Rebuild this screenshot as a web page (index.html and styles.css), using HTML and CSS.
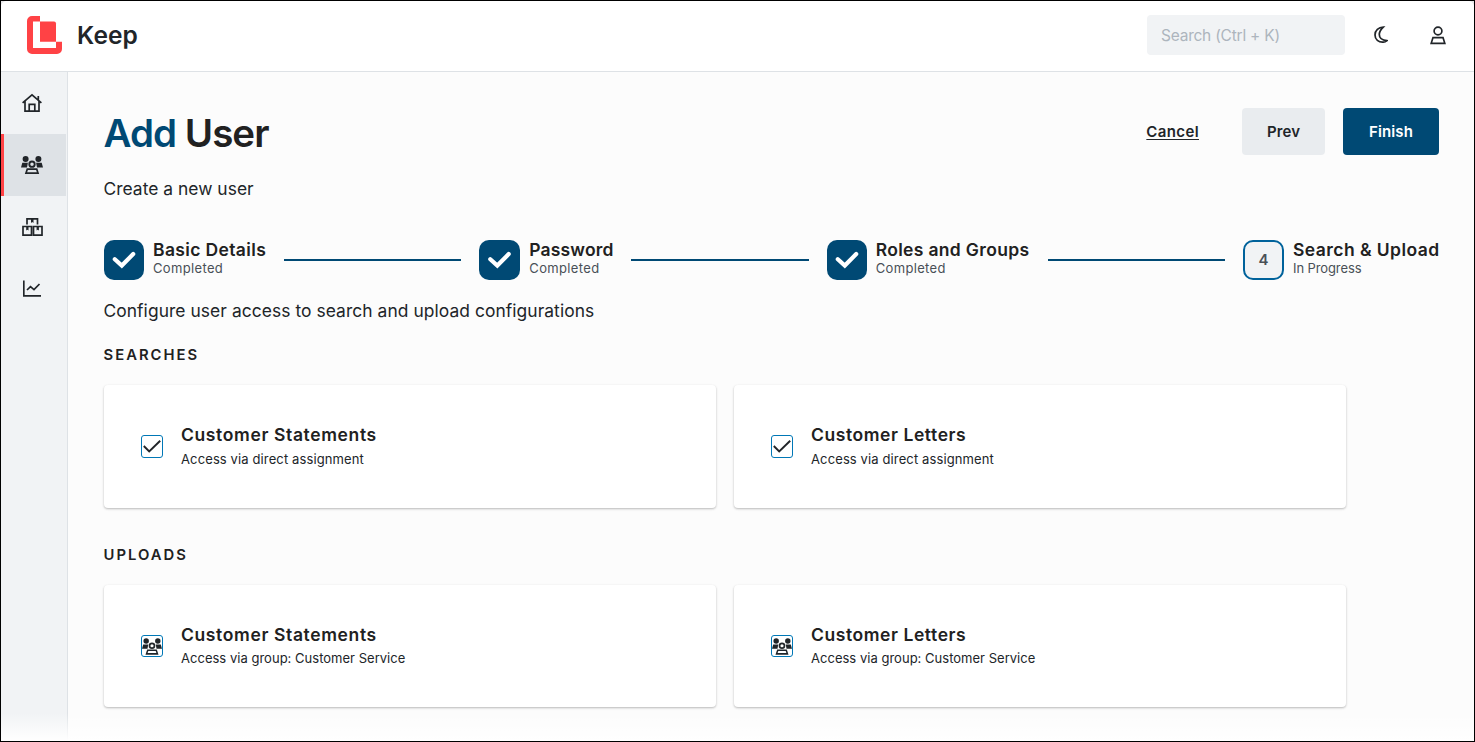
FILE: index.html
```html
<!DOCTYPE html>
<html lang="en">
<head>
<meta charset="utf-8">
<title>Keep - Add User</title>
<link rel="stylesheet" href="styles.css">
</head>
<body>
<svg class="defs" aria-hidden="true">
  <symbol id="people" viewBox="0 0 22 18">
    <circle cx="4.600" cy="3" r="3"/><circle cx="17.400" cy="3" r="3"/>
    <path d="M0 11.400 1.300 6.800H6.900L6 11.400zM22 11.400 20.700 6.800H15.100L16 11.400z"/>
    <circle cx="11" cy="8.200" r="2.700" fill="none" stroke="currentColor" stroke-width="1.900"/>
    <path d="M6.300 13.200H15.700L17 17.100H5z" fill="none" stroke="currentColor" stroke-width="1.700"/>
  </symbol>
  <symbol id="step-check" viewBox="0 0 40 40">
    <path d="M10.800 19.200 17.800 25.500 29.200 14.100" fill="none" stroke="currentColor" stroke-width="4.200" stroke-linecap="round" stroke-linejoin="miter"/>
  </symbol>
  <symbol id="tick" viewBox="0 0 20 20">
    <path d="M1.800 9 7.200 14.500 18.200 3.700" fill="none" stroke="currentColor" stroke-width="1.900"/>
  </symbol>
</svg>
<div class="frame">
<div class="app">
  <header class="topbar">
    <svg class="logo" viewBox="0 0 35 38"><path d="M5 0H13V5.500H6V32H29V25.700H35V33A5 5 0 0 1 30 38H5A5 5 0 0 1 0 33V5A5 5 0 0 1 5 0Z" fill="#ff4245"/><path d="M13 5.500H27A2 2 0 0 1 29 7.500V25.700H13Z" fill="#ff4245"/></svg>
    <span class="brand">Keep</span>
    <div class="search">Search (Ctrl + K)</div>
    <svg class="moon" viewBox="0 0 14 18"><path d="M9.300 1.200C4.500 1.300 1 4.500 1 9S4.500 16.500 9.300 16.200C10.800 16.100 12 15.500 13 14.700 8.500 14.300 5.300 12 5.300 8.600 5.300 5.500 7.400 3 9.300 1.200Z"/></svg>
    <svg class="person" viewBox="0 0 16 19"><circle cx="8" cy="5" r="3.900"/><path d="M3 11.600H13L14.800 17.300H1.200Z"/></svg>
  </header>
  <div class="body">
    <nav class="sidebar">
      <a class="nav-item"><svg width="20" height="20" viewBox="0 0 20 20"><path d="M.6 9.800 10 1.800 19.400 9.800M3 8.300V18.200H17V8.300M16.300 6.800V3M7.200 18V11.300H12.800V18" fill="none" stroke="currentColor" stroke-width="1.700"/></svg></a>
      <a class="nav-item active"><svg width="22" height="18"><use href="#people"/></svg></a>
      <a class="nav-item"><svg width="21" height="18" viewBox="0 0 21 18"><path d="M5 6.500V.8H15.500V6.500M1 8.500H9.500V17.200H1ZM11.500 8.500H20V17.200H11.500Z" fill="none" stroke="currentColor" stroke-width="1.700"/><path d="M9 1H11.500V5L10.200 4 9 5ZM4.200 9H6.500V12.600L5.300 11.700 4.200 12.600ZM14.600 9H16.900V12.600L15.700 11.700 14.600 12.600Z"/></svg></a>
      <a class="nav-item chart"><svg width="18" height="17" viewBox="0 0 18 17"><path d="M.8.500V15.800H18M4 10 7.500 6.600 11 9.600 16.500 4" fill="none" stroke="currentColor" stroke-width="1.700"/></svg></a>
    </nav>
    <main class="main">
      <div class="title-row">
        <h1 class="title"><span class="accent">Add</span> User</h1>
        <div class="actions"><a class="cancel">Cancel</a><button class="btn prev">Prev</button><button class="btn finish">Finish</button></div>
      </div>
      <p class="lead">Create a new user</p>
      <div class="stepper">
        <div class="step basic"><svg class="step-icon done"><use href="#step-check"/></svg><div><div class="step-name">Basic Details</div><div class="step-state">Completed</div></div></div>
        <div class="line"></div>
        <div class="step password"><svg class="step-icon done"><use href="#step-check"/></svg><div><div class="step-name">Password</div><div class="step-state">Completed</div></div></div>
        <div class="line"></div>
        <div class="step roles"><svg class="step-icon done"><use href="#step-check"/></svg><div><div class="step-name">Roles and Groups</div><div class="step-state">Completed</div></div></div>
        <div class="line"></div>
        <div class="step upload"><div class="step-icon current">4</div><div><div class="step-name">Search &amp; Upload</div><div class="step-state">In Progress</div></div></div>
      </div>
      <p class="lead config">Configure user access to search and upload configurations</p>
      <h2 class="section">SEARCHES</h2>
      <div class="cards searches">
        <div class="card"><div class="check"><svg width="20" height="20"><use href="#tick"/></svg></div><div><div class="card-name">Customer Statements</div><div class="card-note">Access via direct assignment</div></div></div>
        <div class="card"><div class="check"><svg width="20" height="20"><use href="#tick"/></svg></div><div><div class="card-name letters">Customer Letters</div><div class="card-note">Access via direct assignment</div></div></div>
      </div>
      <h2 class="section">UPLOADS</h2>
      <div class="cards uploads">
        <div class="card"><div class="check"><svg width="20" height="17"><use href="#people"/></svg></div><div><div class="card-name">Customer Statements</div><div class="card-note">Access via group: Customer Service</div></div></div>
        <div class="card"><div class="check"><svg width="20" height="17"><use href="#people"/></svg></div><div><div class="card-name letters">Customer Letters</div><div class="card-note">Access via group: Customer Service</div></div></div>
      </div>
    </main>
  </div>
  <div class="fade"></div>
</div>
</div>
</body>
</html>
```
FILE: styles.css
```css
* { box-sizing: border-box; }
body { margin: 0; font-family: Inter, "Open Sans", sans-serif; color: #212529; }
h1, h2, p { margin: 0; }
svg { display: block; fill: currentColor; flex: none; }
.defs { position: absolute; width: 0; height: 0; }
.frame { width: 1475px; height: 742px; border: 1px solid #000; background: #e6e6e8; overflow: hidden; }
.app { position: relative; height: 740px; display: flex; flex-direction: column; border-radius: 6px 6px 0 0; overflow: hidden; background: #fcfcfc; }

.topbar { height: 71px; flex: none; display: flex; align-items: center; background: #fff; border-bottom: 1px solid #dee2e6; padding: 0 28px 2px 26px; }
.logo { width: 35px; height: 38px; }
.brand { margin-left: 15px; font-size: 24.5px; font-weight: 600; letter-spacing: .13px; line-height: 30px; }
.search { margin-left: auto; width: 198px; height: 40px; border-radius: 4px; background: #f1f3f5; color: #adb5bd; font-size: 15.5px; line-height: 41px; letter-spacing: -.23px; padding-left: 14px; white-space: nowrap; }
.moon { width: 14px; height: 18px; margin-left: 29px; fill: none; stroke: #212529; stroke-width: 1.7; }
.person { width: 16px; height: 19px; margin-left: 42px; fill: none; stroke: #212529; stroke-width: 1.7; }

.body { flex: 1; display: flex; min-height: 0; }
.sidebar { width: 67px; flex: none; background: #f1f3f5; border-right: 1px solid #dee2e6; padding-right: 1px; }
.nav-item { height: 62px; display: flex; align-items: center; justify-content: center; padding-right: 3px; }
.nav-item.active { background: #dee2e6; border-left: 3px solid #ff4245; padding-right: 6px; }
.nav-item.chart { padding-bottom: 1px; }

.main { flex: 1; padding: 36px 35px 0 36px; }
.title-row { height: 47px; display: flex; justify-content: space-between; }
.title { margin-left: -.5px; font-size: 38.5px; font-weight: 600; line-height: 50px; letter-spacing: -.97px; color: #212121; }
.accent { color: #004974; }
.actions { display: flex; align-items: center; font-size: 15px; font-weight: 600; }
.cancel { text-decoration: underline; text-underline-offset: 2px; letter-spacing: .38px; margin-right: 43px; }
.btn { height: 47px; border: 0; border-radius: 4px; font: inherit; letter-spacing: .12px; padding: 0; text-align: center; }
.prev { width: 83px; background: #e9ecef; color: #212529; }
.finish { width: 96px; margin-left: 18px; background: #004974; color: #fff; }
.lead { margin-top: 23px; margin-left: -.5px; font-size: 17.4px; line-height: 22px; letter-spacing: .03px; }

.stepper { margin-top: 40px; height: 40px; display: flex; align-items: center; gap: 18px; }
.step { display: flex; flex: none; gap: 9px; white-space: nowrap; }
.basic { width: 162px; letter-spacing: .36px; }
.password { width: 134px; letter-spacing: .15px; }
.roles { width: 203px; letter-spacing: .33px; }
.upload { width: 196px; letter-spacing: .44px; }
.step-icon { width: 40px; height: 40px; flex: none; border-radius: 10px; }
.password .step-icon, .upload .step-icon { width: 41px; }
.done { background: #004974; color: #fff; }
.current { display: flex; align-items: center; justify-content: center; padding-bottom: 2px; border: 2px solid #00629b; background: #f1f3f5; color: #495057; font-size: 15px; font-weight: 600; letter-spacing: 0; }
.step-name { font-size: 17.5px; font-weight: 600; line-height: 20px; color: #212121; }
.step-state { font-size: 13px; line-height: 17px; color: #495057; letter-spacing: .35px; }
.upload .step-state { letter-spacing: -.1px; }
.line { flex: 1; height: 2px; background: #004974; }
.config { margin-top: 20px; letter-spacing: .07px; }

.section { margin-top: 23px; margin-left: -.5px; height: 19px; font-size: 14.8px; font-weight: 600; line-height: 21px; letter-spacing: 2.03px; color: #212121; }
.cards { width: 1242px; margin-top: 21px; display: grid; grid-template-columns: 1fr 1fr; gap: 18px; }
.searches { height: 123px; }
.searches + .section { margin-top: 37px; }
.uploads { height: 122px; }
.card { display: flex; align-items: center; gap: 18px; padding-left: 37px; background: #fff; border-radius: 4px; box-shadow: 0 1px 3px rgba(0,0,0,.12), 0 1px 2px rgba(0,0,0,.16); }
.check { width: 22px; height: 23px; display: flex; align-items: center; justify-content: center; border: 1px solid #0077b6; border-radius: 3px; }
.uploads .check { height: 22px; }
.card-name { font-size: 17.5px; font-weight: 600; line-height: 24px; letter-spacing: .63px; color: #212121; }
.letters { letter-spacing: .57px; }
.card-note { font-size: 13px; line-height: 24px; letter-spacing: .12px; }
.uploads .card-name { padding-top: 1px; }
.uploads .card-note { line-height: 23px; letter-spacing: .02px; }
.fade { position: absolute; left: 0; right: 0; bottom: 0; height: 28px; background: linear-gradient(rgba(255,255,255,0), #fff); }
```
